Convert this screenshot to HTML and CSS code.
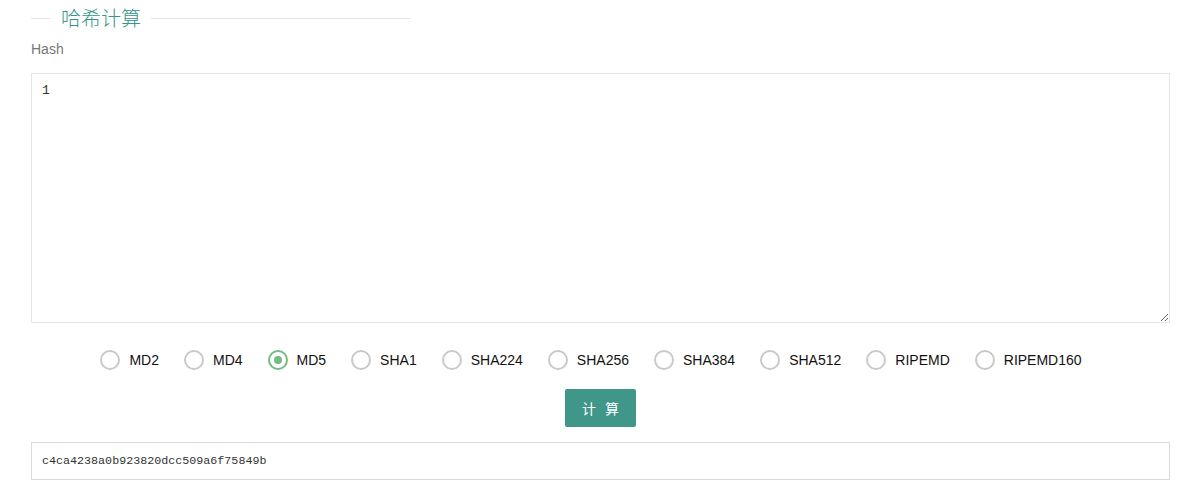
FILE: index.html
```html
<!DOCTYPE html>
<html lang="zh-CN">
<head>
    <meta charset="UTF-8">
    <meta name="viewport" content="width=device-width, initial-scale=1.0">
    <title>哈希计算</title>
    <link rel="stylesheet" href="styles.css">
</head>
<body>
    <div class="container">
        <div class="field-title">
            <span class="field-line field-line-left"></span>
            <span class="field-legend">哈希计算</span>
            <span class="field-line"></span>
        </div>

        <div class="form-label">Hash</div>
        <textarea class="hash-input" id="hash-input">1</textarea>

        <div class="radio-row">
            <label class="radio-item"><span class="radio-icon"></span><span>MD2</span></label>
            <label class="radio-item"><span class="radio-icon"></span><span>MD4</span></label>
            <label class="radio-item checked"><span class="radio-icon"></span><span>MD5</span></label>
            <label class="radio-item"><span class="radio-icon"></span><span>SHA1</span></label>
            <label class="radio-item"><span class="radio-icon"></span><span>SHA224</span></label>
            <label class="radio-item"><span class="radio-icon"></span><span>SHA256</span></label>
            <label class="radio-item"><span class="radio-icon"></span><span>SHA384</span></label>
            <label class="radio-item"><span class="radio-icon"></span><span>SHA512</span></label>
            <label class="radio-item"><span class="radio-icon"></span><span>RIPEMD</span></label>
            <label class="radio-item"><span class="radio-icon"></span><span>RIPEMD160</span></label>
        </div>

        <div class="btn-row">
            <button class="btn">计 算</button>
        </div>

        <input class="result-input" type="text" value="c4ca4238a0b923820dcc509a6f75849b" readonly>
    </div>
</body>
</html>
```

FILE: styles.css
```css
* {
    margin: 0;
    padding: 0;
    box-sizing: border-box;
}

body {
    font-family: Arial, "Liberation Sans", "Noto Sans CJK SC", sans-serif;
    background: #fff;
    color: #333;
}

.container {
    padding: 4px 14px 0 31px;
}

/* 标题 */
.field-title {
    display: flex;
    align-items: center;
    width: 380px;
    height: 28px;
}

.field-line {
    flex: 1;
    height: 1px;
    background: #e6e6e6;
}

.field-line-left {
    flex: none;
    width: 20px;
}

.field-legend {
    padding: 0 10px;
    font-family: "Noto Sans CJK SC", sans-serif;
    font-size: 20px;
    font-weight: 300;
    color: #35968a;
    line-height: 28px;
}

.form-label {
    margin-top: 7px;
    font-size: 14px;
    line-height: 20px;
    color: #777;
}

.hash-input {
    display: block;
    width: 100%;
    height: 250px;
    margin-top: 14px;
    padding: 7px 10px 6px;
    border: 1px solid #e6e6e6;
    font-family: "Liberation Mono", monospace;
    font-size: 13px;
    line-height: 20px;
    color: #333;
    outline: none;
}

/* 单选 */
.radio-row {
    display: flex;
    justify-content: center;
    gap: 25px;
    margin-top: 23px;
    padding-right: 19px;
    height: 28px;
    align-items: center;
}

.radio-item {
    display: flex;
    align-items: center;
    font-size: 14px;
    color: #111;
    cursor: pointer;
}

.radio-icon {
    width: 20px;
    height: 20px;
    margin-right: 9px;
    border: 2px solid #c9c9c9;
    border-radius: 50%;
    display: flex;
    align-items: center;
    justify-content: center;
}

.radio-item.checked .radio-icon {
    border-color: #74bb84;
}

.radio-item.checked .radio-icon::after {
    content: "";
    width: 8px;
    height: 8px;
    border-radius: 50%;
    background: #74bb84;
}

.btn-row {
    display: flex;
    justify-content: center;
    margin-top: 15px;
}

.btn {
    width: 71px;
    height: 38px;
    border: none;
    border-radius: 2px;
    background: #41968a;
    color: #fff;
    font-family: "Noto Sans CJK SC", sans-serif;
    font-size: 14px;
    word-spacing: 6px;
    cursor: pointer;
}

.result-input {
    display: block;
    width: 100%;
    height: 38px;
    margin-top: 15px;
    padding: 0 10px;
    border: 1px solid #d9d9d9;
    font-family: "Liberation Mono", monospace;
    font-size: 11.7px;
    color: #333;
    outline: none;
}
```
